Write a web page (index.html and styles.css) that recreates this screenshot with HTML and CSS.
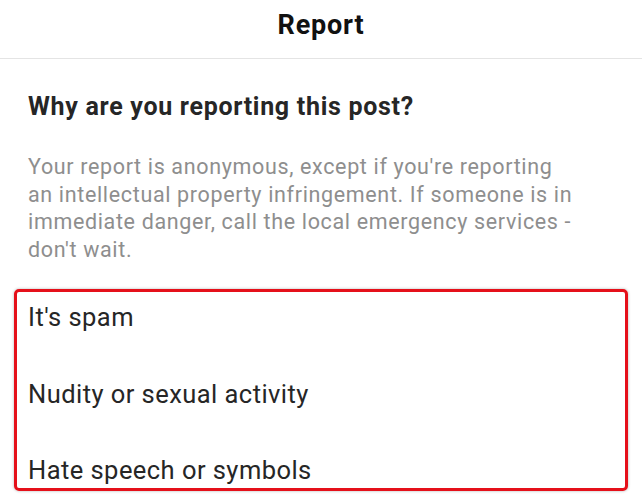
FILE: index.html
```html
<!DOCTYPE html>
<html lang="en">
<head>
  <meta charset="UTF-8">
  <meta name="viewport" content="width=device-width, initial-scale=1.0">
  <title>Report</title>
  <link rel="stylesheet" href="styles.css">
</head>
<body>
  <header class="report-header">
    <h1>Report</h1>
  </header>

  <main class="report-body">
    <h2>Why are you reporting this post?</h2>
    <p class="report-note">Your report is anonymous, except if you're reporting an intellectual property infringement. If someone is in immediate danger, call the local emergency services - don't wait.</p>

    <ul class="report-options">
      <li>It's spam</li>
      <li>Nudity or sexual activity</li>
      <li>Hate speech or symbols</li>
    </ul>
  </main>
</body>
</html>
```

FILE: styles.css
```css
/* Reset */
* {
  margin: 0;
  padding: 0;
  box-sizing: border-box;
}

html, body {
  height: 100%;
  background: #fff;
  font-family: Roboto, 'Liberation Sans', Arial, sans-serif;
  color: #262626;
  overflow: hidden;
}

/* Top bar */
.report-header {
  height: 59px;
  padding-top: 9px;
  text-align: center;
  border-bottom: 1px solid #e4e4e4;
}

.report-header h1 {
  font-size: 27px;
  font-weight: 700;
  letter-spacing: 0.8px;
  color: #111;
}

/* Body */
.report-body {
  padding-top: 33px;
}

.report-body h2 {
  padding: 0 28px;
  font-size: 25px;
  font-weight: 700;
  letter-spacing: 0.7px;
}

.report-note {
  max-width: 608px;
  padding: 0 28px;
  margin-top: 32px;
  font-size: 21.5px;
  line-height: 27.5px;
  letter-spacing: 0.65px;
  color: #8e8e8e;
}

/* Options, outlined in red */
.report-options {
  list-style: none;
  display: flex;
  flex-direction: column;
  gap: 47px;
  margin: 26px 14px 0;
  padding: 11px 11px 2px;
  border: 3px solid #e5101a;
  border-radius: 5px;
  box-shadow: 0 0 3px rgba(0, 0, 0, 0.3);
}

.report-options li {
  font-size: 25.5px;
  line-height: 29.5px;
  letter-spacing: 0.45px;
  color: #262626;
}
```
